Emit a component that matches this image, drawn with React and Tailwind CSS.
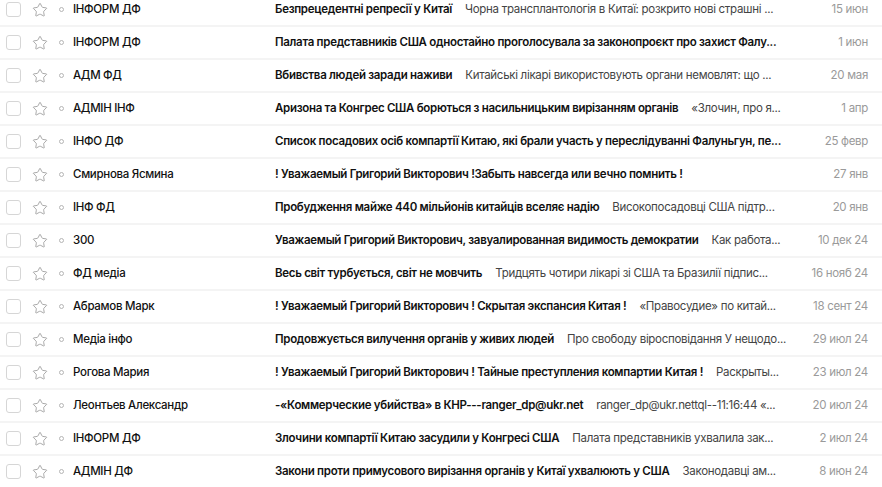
import React from "react";
import { Star } from "lucide-react";

const letters = [
  { from: "ІНФОРМ ДФ", subject: "Безпрецедентні репресії у Китаї", snippet: "Чорна трансплантологія в Китаї: розкрито нові страшні ...", date: "15 июн" },
  { from: "ІНФОРМ ДФ", subject: "Палата представників США одностайно проголосувала за законопроєкт про захист Фалу...", snippet: "", date: "1 июн" },
  { from: "АДМ ФД", subject: "Вбивства людей заради наживи", snippet: "Китайські лікарі використовують органи немовлят: що ...", date: "20 мая" },
  { from: "АДМІН ІНФ", subject: "Аризона та Конгрес США борються з насильницьким вирізанням органів", snippet: "«Злочин, про я...", date: "1 апр" },
  { from: "ІНФО ДФ", subject: "Список посадових осіб компартії Китаю, які брали участь у переслідуванні Фалуньгун, пе...", snippet: "", date: "25 февр" },
  { from: "Смирнова Ясмина", subject: "! Уважаемый Григорий Викторович !Забыть навсегда или вечно помнить !", snippet: "", date: "27 янв" },
  { from: "ІНФ ФД", subject: "Пробудження майже 440 мільйонів китайців вселяє надію", snippet: "Високопосадовці США підтр...", date: "20 янв" },
  { from: "300", subject: "Уважаемый Григорий Викторович, завуалированная видимость демократии", snippet: "Как работа...", date: "10 дек 24" },
  { from: "ФД медіа", subject: "Весь світ турбується, світ не мовчить", snippet: "Тридцять чотири лікарі зі США та Бразилії підпис...", date: "16 нояб 24" },
  { from: "Абрамов Марк", subject: "! Уважаемый Григорий Викторович ! Скрытая экспансия Китая !", snippet: "«Правосудие» по китай...", date: "18 сент 24" },
  { from: "Медіа інфо", subject: "Продовжується вилучення органів у живих людей", snippet: "Про свободу віросповідання У нещодо...", date: "29 июл 24" },
  { from: "Рогова Мария", subject: "! Уважаемый Григорий Викторович ! Тайные преступления компартии Китая !", snippet: "Раскрыты...", date: "23 июл 24" },
  { from: "Леонтьев Александр", subject: "-«Коммерческие убийства» в КНР---ranger_dp@ukr.net", snippet: "ranger_dp@ukr.nettql--11:16:44 «...", date: "20 июл 24" },
  { from: "ІНФОРМ ДФ", subject: "Злочини компартії Китаю засудили у Конгресі США", snippet: "Палата представників ухвалила зак...", date: "2 июл 24" },
  { from: "АДМІН ДФ", subject: "Закони проти примусового вирізання органів у Китаї ухвалюють у США", snippet: "Законодавці ам...", date: "8 июн 24" },
];

function Row({ letter }) {
  return (
    <div className="flex h-[33px] items-center border-b-2 border-[#f4f4f4] bg-white">
      <div className="ml-[6px] h-[15px] w-[15px] shrink-0 rounded-[3px] border border-[#d6d6d6]" />
      <Star className="ml-[11px] h-[16px] w-[16px] shrink-0 text-[#a3a3a3]" strokeWidth={1.4} />
      <div className="ml-[11px] h-[5px] w-[5px] shrink-0 rounded-full border border-[#b5b5b5]" />
      <div className="ml-[9px] w-[202px] shrink-0 truncate font-medium text-[#111]">{letter.from}</div>
      <div className="min-w-0 flex-1 truncate pr-[4px] text-[#111]">
        <span className="font-semibold">{letter.subject}</span>
        {letter.snippet && <span className="ml-[13px] text-[#444]">{letter.snippet}</span>}
      </div>
      <div className="w-[90px] shrink-0 pr-[14px] text-right text-[#9a9a9a]">{letter.date}</div>
    </div>
  );
}

export default function App() {
  return (
    <div className="h-[487px] w-full overflow-hidden bg-white text-[11.5px] tracking-[-0.3px] font-['Inter',sans-serif]">
      <div className="-mt-[6px]">
        {letters.map((letter, i) => (
          <Row key={i} letter={letter} />
        ))}
      </div>
    </div>
  );
}
